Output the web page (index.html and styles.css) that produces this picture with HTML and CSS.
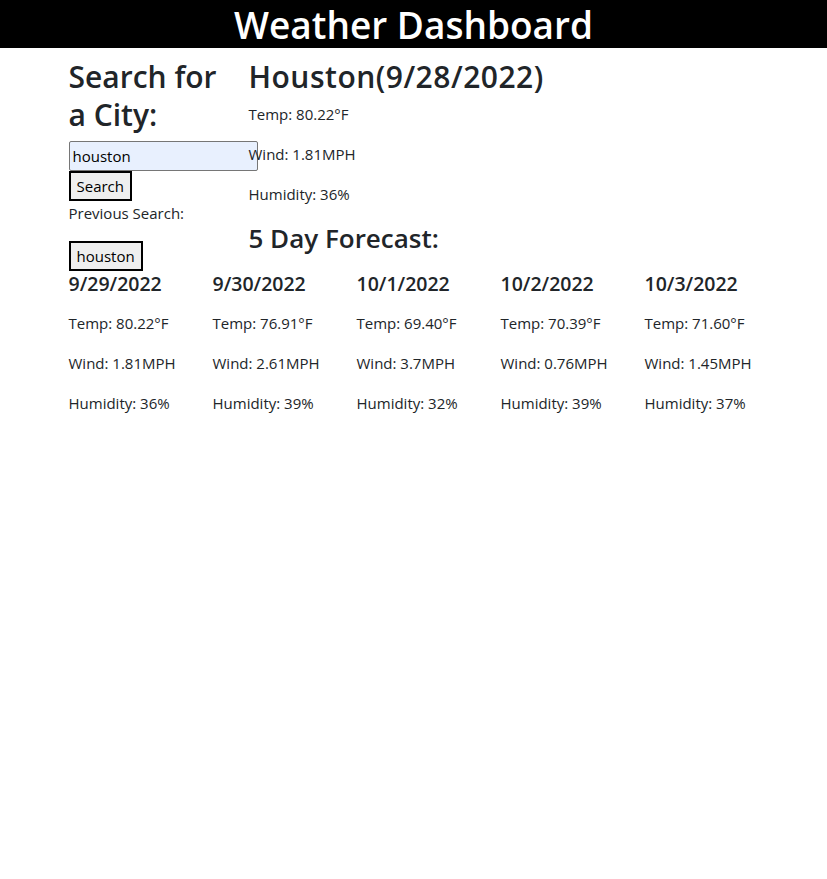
FILE: index.html
```html
<!DOCTYPE html>
<html lang="en">
<head>
<meta charset="utf-8">
<title>Weather Dashboard</title>
<link rel="stylesheet" href="styles.css">
</head>
<body>
<header class="topbar">
  <h1 class="title">Weather Dashboard</h1>
</header>
<main class="container">
  <div class="top-row">
    <aside class="search-col">
      <h2 class="heading">Search for a City:</h2>
      <input class="city-input" type="text" value="houston">
      <button class="btn" type="button">Search</button>
      <p class="text">Previous Search:</p>
      <button class="btn" type="button">houston</button>
    </aside>
    <section class="current-col">
      <h2 class="heading city-name">Houston(9/28/2022)</h2>
      <p class="text">Temp: 80.22°F</p>
      <p class="text">Wind: 1.81MPH</p>
      <p class="text">Humidity: 36%</p>
      <h3 class="subheading">5 Day Forecast:</h3>
    </section>
  </div>
  <div class="forecast">
    <div class="day">
      <h5 class="date">9/29/2022</h5>
      <p class="text">Temp: 80.22°F</p>
      <p class="text">Wind: 1.81MPH</p>
      <p class="text">Humidity: 36%</p>
    </div>
    <div class="day">
      <h5 class="date">9/30/2022</h5>
      <p class="text">Temp: 76.91°F</p>
      <p class="text">Wind: 2.61MPH</p>
      <p class="text">Humidity: 39%</p>
    </div>
    <div class="day">
      <h5 class="date">10/1/2022</h5>
      <p class="text">Temp: 69.40°F</p>
      <p class="text">Wind: 3.7MPH</p>
      <p class="text">Humidity: 32%</p>
    </div>
    <div class="day">
      <h5 class="date">10/2/2022</h5>
      <p class="text">Temp: 70.39°F</p>
      <p class="text">Wind: 0.76MPH</p>
      <p class="text">Humidity: 39%</p>
    </div>
    <div class="day">
      <h5 class="date">10/3/2022</h5>
      <p class="text">Temp: 71.60°F</p>
      <p class="text">Wind: 1.45MPH</p>
      <p class="text">Humidity: 37%</p>
    </div>
  </div>
</main>
</body>
</html>
```
FILE: styles.css
```css
* { box-sizing: border-box; }
html, body { margin: 0; padding: 0; background: #fff; }
body {
  font-family: "Open Sans", "Noto Sans", sans-serif;
  font-size: 15px;
  line-height: 24px;
  color: #212529;
}
.topbar {
  background: #000;
  height: 48px;
  display: flex;
  justify-content: center;
  align-items: center;
  margin-bottom: 8px;
  overflow: visible;
}
.title {
  margin: 0;
  color: #fff;
  font-size: 37px;
  line-height: 48px;
  font-weight: 600;
  padding-top: 2px;
}
.container {
  width: 690px;
  margin: 0 auto;
}
.top-row {
  display: flex;
  gap: 30px;
}
.search-col {
  width: 150px;
  flex: none;
  display: flex;
  flex-direction: column;
  align-items: flex-start;
}
.current-col { flex: 1; }
.heading {
  margin: 0 0 8px;
  font-size: 30px;
  line-height: 38.4px;
  font-weight: 600;
  padding-top: 2px;
  height: 38.4px;
  box-sizing: content-box;
}
.search-col .heading {
  height: auto;
  margin-bottom: 6px;
}
.city-name {
  letter-spacing: 0.5px;
  margin-bottom: 6px;
}
.subheading {
  margin: 0 0 8px;
  font-size: 26px;
  line-height: 33.6px;
  font-weight: 600;
}
.text { margin: 0 0 16px; }
.city-input {
  width: 189px;
  height: 30px;
  flex: none;
  margin: 0;
  padding: 1px 3px;
  border: 1px solid #767676;
  border-radius: 2px;
  background: #e8f0fe;
  font: inherit;
  color: #000;
}
.btn {
  height: 30px;
  margin: 0;
  padding: 0 6px;
  border: 2px solid #000;
  background: #efefef;
  font: inherit;
  color: #000;
}
.forecast {
  display: grid;
  grid-template-columns: repeat(5, 114px);
  column-gap: 30px;
  padding-top: 1px;
}
.date {
  margin: 0 0 15px;
  font-size: 19.5px;
  line-height: 24px;
  font-weight: 600;
}
```
